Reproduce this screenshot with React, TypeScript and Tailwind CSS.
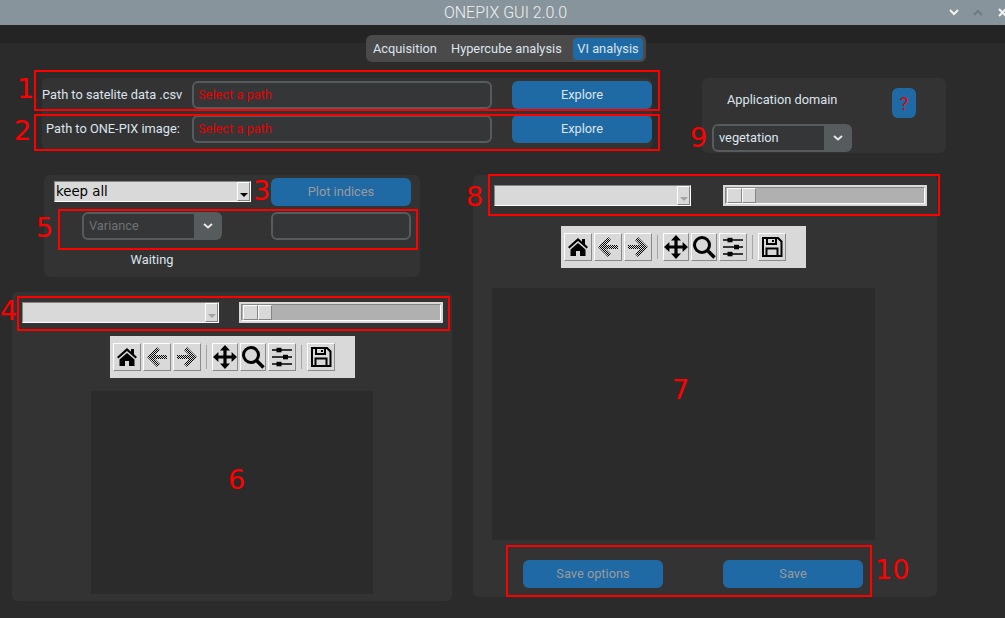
import type { ReactNode } from "react";

const btn = "flex h-[28px] w-[140px] items-center justify-center rounded-md bg-[#1f6aa5] text-[12.800px]";
const entry = "flex h-[28px] items-center rounded-md border-2 border-[#565b5e] bg-[#343638] px-[4px] text-[12.800px]";

function OptionMenu({ label, dim }: { label: string; dim?: boolean }) {
  return (
    <div className="flex h-[28px] w-[140px] overflow-hidden rounded-md bg-[#565b5e] p-[2px] pr-0 text-[12.800px]">
      <div className={`flex w-[110px] items-center rounded-l-[4px] bg-[#343638] px-[5px] ${dim ? "text-[#6f7275]" : "text-[#dce4ee]"}`}>
        {label}
      </div>
      <div className="flex flex-1 items-center justify-center">
        <svg width="10" height="6" viewBox="0 0 10 6" fill="none" stroke="#e8e8e8" strokeWidth="2">
          <path d="M1 1l4 3.5L9 1" />
        </svg>
      </div>
    </div>
  );
}

function TkCombo({ label, dim }: { label?: string; dim?: boolean }) {
  return (
    <div className="flex h-[21px] w-[197px] border border-t-[#858585] border-l-[#858585] border-r-white border-b-white bg-[#d9d9d9]">
      <div className="flex-1 pl-[1px] font-['DejaVu_Sans',sans-serif] text-[13.300px] leading-[19px] text-black">{label}</div>
      <div className="flex w-[13px] flex-col items-center justify-end border border-t-white border-l-white border-r-[#858585] border-b-[#858585] pb-[3px]">
        <div className={`h-0 w-0 border-x-[4px] border-t-[4px] border-x-transparent ${dim ? "border-t-[#a3a3a3]" : "border-t-black"}`} />
      </div>
    </div>
  );
}

function TkScale() {
  return (
    <div className="h-[21px] w-[204px] bg-[#d9d9d9] p-[2px]">
      <div className="flex h-[17px] border border-t-[#858585] border-l-[#858585] border-r-white border-b-white bg-[#b0b0b0] pl-[1px]">
        <div className="h-[15px] w-[15px] border border-t-white border-l-white border-r-[#858585] border-b-[#858585] bg-[#d9d9d9]" />
        <div className="h-[15px] w-[14px] border border-t-white border-l-white border-r-[#858585] border-b-[#858585] bg-[#d9d9d9]" />
      </div>
    </div>
  );
}

function Tool({ w = 28, children }: { w?: 26 | 28; children: ReactNode }) {
  return (
    <div className={`flex h-[28px] ${w === 26 ? "w-[26px]" : "w-[28px]"} items-center justify-center border border-t-white border-l-white border-r-[#8a8a8a] border-b-[#8a8a8a]`}>
      {children}
    </div>
  );
}

const Sep = () => <div className="mx-[5px] h-[24px] w-[1px] bg-[#a5a5a5]" />;

function Dither({ id }: { id: string }) {
  return (
    <defs>
      <pattern id={id} width="2" height="2" patternUnits="userSpaceOnUse">
        <rect width="1" height="1" fill="#000" />
        <rect x="1" y="1" width="1" height="1" fill="#000" />
      </pattern>
    </defs>
  );
}

function Toolbar() {
  return (
    <div className="flex h-[42px] w-[245px] items-center bg-[#d9d9d9] pl-[3px]">
      <Tool>
        <svg width="22" height="22" viewBox="0 0 22 22">
          <path d="M11 2L1 11l1.400 1.600L11 5.100l8.600 7.500 1.400-1.600-3-2.700V3h-3v2.700z" />
          <path d="M3.500 13.500L11 7l7.500 6.500V20H13v-5H9v5H3.500z" />
        </svg>
      </Tool>
      <div className="w-[2px]" />
      <Tool>
        <svg width="22" height="22" viewBox="0 0 22 22">
          <Dither id="d1" />
          <path d="M11 1L1 11l10 10 3-3-5-5h12V9H9l5-5z" fill="url(#d1)" />
        </svg>
      </Tool>
      <div className="w-[2px]" />
      <Tool>
        <svg width="22" height="22" viewBox="0 0 22 22">
          <Dither id="d2" />
          <path d="M11 1l10 10-10 10-3-3 5-5H1V9h12L8 4z" fill="url(#d2)" />
        </svg>
      </Tool>
      <Sep />
      <Tool w={26}>
        <svg width="24" height="24" viewBox="0 0 24 24">
          <path d="M12 0l5 5.500h-3.400v5h5V7l5.400 5-5.400 5v-3.600h-5v5H17L12 24l-5-5.600h3.400v-5h-5V17L0 12l5.400-5v3.600h5v-5H7z" />
        </svg>
      </Tool>
      <div className="w-[2px]" />
      <Tool w={26}>
        <svg width="24" height="24" viewBox="0 0 24 24" fill="none" stroke="#000">
          <circle cx="10" cy="10" r="7.500" strokeWidth="3" />
          <path d="M15.500 15.500L22.500 22.500" strokeWidth="3.500" />
        </svg>
      </Tool>
      <div className="w-[2px]" />
      <Tool>
        <svg width="22" height="22" viewBox="0 0 22 22">
          <path d="M1 4h20M1 11h20M1 18h20" stroke="#000" strokeWidth="1.400" />
          <rect x="5.500" y="1.800" width="5" height="4.500" />
          <rect x="12" y="8.800" width="5" height="4.500" />
          <rect x="5.500" y="15.800" width="5" height="4.500" />
        </svg>
      </Tool>
      <Sep />
      <Tool>
        <svg width="22" height="22" viewBox="0 0 22 22" fill="none" stroke="#000" strokeWidth="2">
          <path d="M2 2h15l3.500 3.500V20H2z" />
          <path d="M6 2v6h9V2M12 4v2" />
          <path d="M5.500 20v-7.500h11V20" />
        </svg>
      </Tool>
    </div>
  );
}

function Mark({ className }: { className: string }) {
  return <div className={`pointer-events-none absolute border-2 border-[#ff0000] ${className}`} />;
}

function Num({ n, className }: { n: string; className: string }) {
  return (
    <span className={`pointer-events-none absolute font-['DejaVu_Sans',sans-serif] text-[27px] leading-[30px] text-[#ff0000] ${className}`}>
      {n}
    </span>
  );
}

export default function App() {
  return (
    <div className="relative h-[618px] w-[1005px] overflow-hidden bg-[#242424] font-['Roboto',sans-serif] text-[#dce4ee]">
      {/* window title */}
      <div className="relative flex h-[25px] items-center justify-center bg-[#88949b] pl-[6px] text-[16px] font-light text-[#f0f0f0]">
        ONEPIX GUI 2.0.0
        <svg className="absolute left-[949px] top-[9px]" width="10" height="7" viewBox="0 0 10 7" fill="none" stroke="#f2f2f2" strokeWidth="2">
          <path d="M1 1l4 4 4-4" />
        </svg>
        <svg className="absolute left-[973px] top-[9px]" width="10" height="7" viewBox="0 0 10 7" fill="none" stroke="#6f7a80" strokeWidth="2">
          <path d="M1 6l4-4 4 4" />
        </svg>
        <svg className="absolute left-[998px] top-[8px]" width="9" height="9" viewBox="0 0 9 9" fill="none" stroke="#f2f2f2" strokeWidth="2.200">
          <path d="M1 1l7 7M8 1L1 8" />
        </svg>
      </div>

      <div className="mt-[18px] flow-root h-[575px] bg-[#2b2b2b]">
        {/* tabs */}
        <div className="-mt-[8px] ml-[366px] flex h-[27px] w-[280px] items-center rounded-md bg-[#4a4a4a] pl-[7px] text-[12.800px]">
          <span className="w-[78px]">Acquisition</span>
          <span className="w-[122px]">Hypercube analysis</span>
          <span className="flex h-[22px] w-[70px] items-center justify-center rounded-[4px] bg-[#1f6aa5]">VI analysis</span>
        </div>

        {/* paths + application domain */}
        <div className="mt-[16px] flex items-start">
          <div className="ml-[42px] h-[72px] w-[610px] rounded-md bg-[#333333]">
            <div className="mt-[3px] flex items-center pt-0">
              <span className="w-[150px] text-[12.800px]">Path to satelite data .csv</span>
              <div className={`${entry} w-[300px] text-[#e60000]`}>Select a path</div>
              <div className={`${btn} ml-[20px]`}>Explore</div>
            </div>
            <div className="mt-[6px] flex items-center">
              <span className="w-[150px] pl-[4px] text-[12.800px]">Path to ONE-PIX image:</span>
              <div className={`${entry} w-[300px] text-[#e60000]`}>Select a path</div>
              <div className={`${btn} ml-[20px]`}>Explore</div>
            </div>
          </div>
          <div className="ml-[50px] h-[75px] w-[244px] rounded-md bg-[#333333] pl-[10px]">
            <div className="flex h-[46px] items-start">
              <span className="ml-[15px] mt-[12px] w-[165px] text-[12.800px]">Application domain</span>
              <div className="mt-[10px] flex h-[30px] w-[24px] items-center justify-center rounded-md bg-[#1f6aa5] text-[18px] text-[#e60000]">?</div>
            </div>
            <OptionMenu label="vegetation" />
          </div>
        </div>

        {/* bottom: two viewers */}
        <div className="mt-[22px] flex items-start">
          <div className="ml-[12px] w-[440px]">
            <div className="ml-[32px] h-[102px] w-[376px] rounded-md bg-[#333333]">
              <div className="flex items-start pl-[10px] pt-[3px]">
                <div className="mt-[3px]">
                  <TkCombo label="keep all" />
                </div>
                <div className={`${btn} ml-[20px] text-[#9a9a9a]`}>Plot indices</div>
              </div>
              <div className="mt-[6px] flex pl-[38px]">
                <OptionMenu label="Variance" dim />
                <div className={`${entry} ml-[49px] w-[140px]`} />
              </div>
              <div className="ml-[38px] mt-[10px] w-[140px] text-center text-[12.800px]">Waiting</div>
            </div>
            <div className="mt-[15px] h-[309px] w-[440px] rounded-md bg-[#333333] pt-[10px]">
              <div className="flex pl-[10px]">
                <TkCombo dim />
                <div className="ml-[20px]">
                  <TkScale />
                </div>
              </div>
              <div className="ml-[98px] mt-[13px]">
                <Toolbar />
              </div>
              <div className="ml-[79px] mt-[13px] h-[203px] w-[282px] bg-[#2b2b2b]" />
            </div>
          </div>

          <div className="ml-[21px] h-[422px] w-[464px] rounded-md bg-[#333333] pt-[10px]">
            <div className="flex pl-[21px]">
              <TkCombo dim />
              <div className="ml-[32px]">
                <TkScale />
              </div>
            </div>
            <div className="ml-[88px] mt-[20px]">
              <Toolbar />
            </div>
            <div className="ml-[19px] mt-[20px] h-[252px] w-[383px] bg-[#2b2b2b]" />
            <div className="ml-[50px] mt-[20px] flex gap-[60px] text-[#9a9a9a]">
              <div className={btn}>Save options</div>
              <div className={btn}>Save</div>
            </div>
          </div>
        </div>
      </div>

      {/* red annotations drawn over the screenshot */}
      <Mark className="left-[34px] top-[70px] h-[41px] w-[626px]" />
      <Mark className="left-[34px] top-[114px] h-[37px] w-[626px]" />
      <Mark className="left-[58px] top-[209px] h-[41px] w-[360px]" />
      <Mark className="left-[17px] top-[296px] h-[35px] w-[433px]" />
      <Mark className="left-[488px] top-[174px] h-[42px] w-[452px]" />
      <Mark className="left-[506px] top-[545px] h-[52px] w-[366px]" />
      <Num n="1" className="left-[17px] top-[74px]" />
      <Num n="2" className="left-[14px] top-[116px]" />
      <Num n="3" className="left-[253px] top-[176px]" />
      <Num n="4" className="left-0 top-[296px]" />
      <Num n="5" className="left-[36px] top-[213px]" />
      <Num n="6" className="left-[228px] top-[465px]" />
      <Num n="7" className="left-[672px] top-[375px]" />
      <Num n="8" className="left-[466px] top-[182px]" />
      <Num n="9" className="left-[690px] top-[123px]" />
      <Num n="10" className="left-[875px] top-[555px]" />
    </div>
  );
}
